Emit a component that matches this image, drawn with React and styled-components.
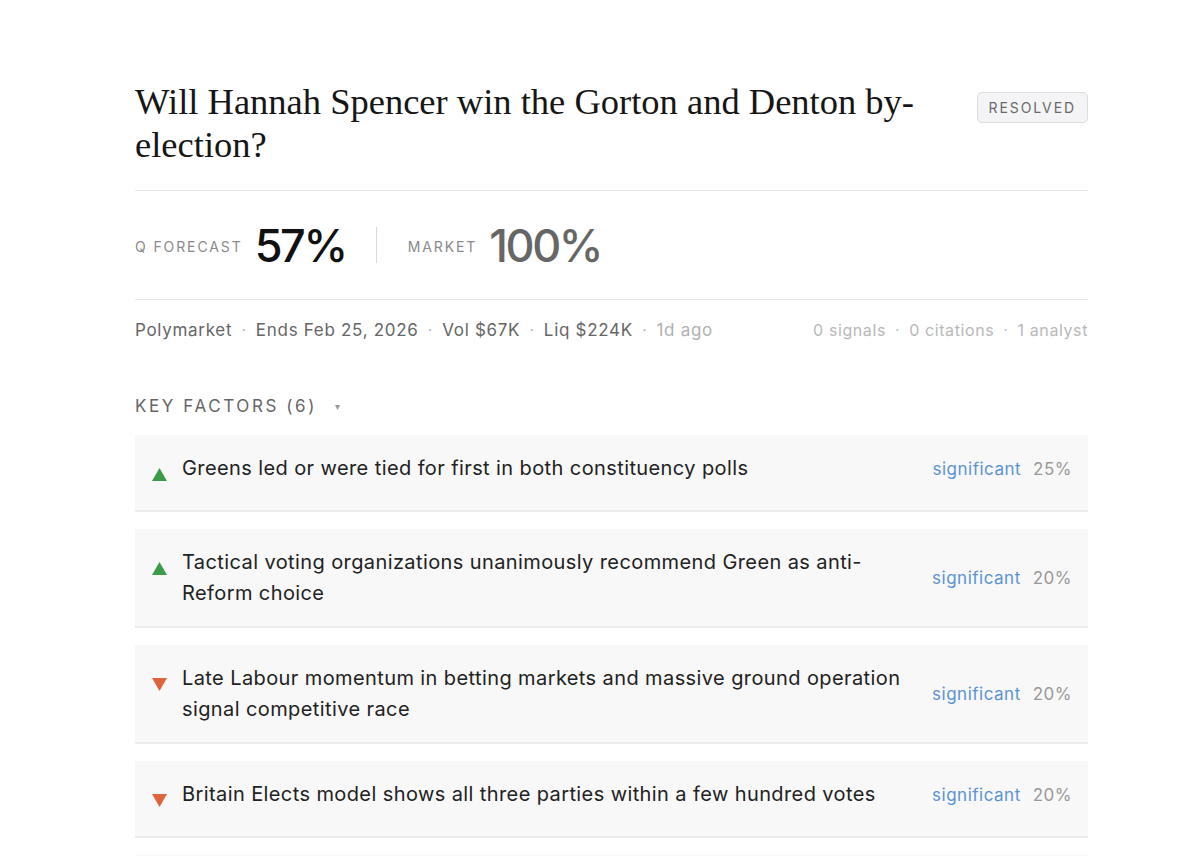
import React from 'react'
import styled, { createGlobalStyle } from 'styled-components'

const GlobalStyle = createGlobalStyle`
  body {
    margin: 0;
    background: #ffffff;
    font-family: Inter, "Noto Sans", sans-serif;
    color: #222;
  }
`

const FACTORS = [
  { dir: 'up', text: 'Greens led or were tied for first in both constituency polls', weight: 25 },
  { dir: 'up', text: 'Tactical voting organizations unanimously recommend Green as anti-Reform choice', weight: 20 },
  { dir: 'down', text: 'Late Labour momentum in betting markets and massive ground operation signal competitive race', weight: 20 },
  { dir: 'down', text: 'Britain Elects model shows all three parties within a few hundred votes', weight: 20 },
  { dir: 'down', text: 'Reform UK polling strongly in the constituency', weight: 15 }
]

const Arrow = ({ dir }) => (
  <ArrowBox>
    <svg width='15' height='13' viewBox='0 0 15 13'>
      {dir === 'up'
        ? <polygon points='7.5,0 15,13 0,13' fill='#3b9b48' />
        : <polygon points='0,0 15,0 7.5,13' fill='#e0643b' />}
    </svg>
  </ArrowBox>
)

const App = () => {
  return (
    <Page>
      <GlobalStyle />
      <Header>
        <Title>Will Hannah Spencer win the Gorton and Denton by-election?</Title>
        <Badge>RESOLVED</Badge>
      </Header>

      <Stats>
        <Stat>
          <StatLabel>Q FORECAST</StatLabel>
          <StatValue>57%</StatValue>
        </Stat>
        <StatDivider />
        <Stat>
          <StatLabel>MARKET</StatLabel>
          <StatValue muted>100%</StatValue>
        </Stat>
      </Stats>

      <Meta>
        <MetaGroup>
          <span>Polymarket</span>
          <Dot>·</Dot>
          <span>Ends Feb 25, 2026</span>
          <Dot>·</Dot>
          <span>Vol $67K</span>
          <Dot>·</Dot>
          <span>Liq $224K</span>
          <Dot>·</Dot>
          <Faint>1d ago</Faint>
        </MetaGroup>
        <MetaGroup light>
          <span>0 signals</span>
          <Dot>·</Dot>
          <span>0 citations</span>
          <Dot>·</Dot>
          <span>1 analyst</span>
        </MetaGroup>
      </Meta>

      <SectionTitle>
        KEY FACTORS (6)
        <Caret>▾</Caret>
      </SectionTitle>

      <FactorList>
        {FACTORS.map((f, i) => (
          <Factor key={i}>
            <FactorBody>
              <Arrow dir={f.dir} />
              <FactorText>{f.text}</FactorText>
              <FactorRight>
                <Impact>significant</Impact>
                <Weight>{f.weight}%</Weight>
              </FactorRight>
            </FactorBody>
          </Factor>
        ))}
      </FactorList>
    </Page>
  )
}

const Page = styled.div`
  width: 953px;
  margin-left: 135px;
  padding-top: 80px;
`

const Header = styled.div`
  display: flex;
  justify-content: space-between;
  align-items: flex-start;
  gap: 40px;
  padding-bottom: 24px;
  border-bottom: 1px solid #e6e6e6;
`

const Title = styled.h1`
  margin: 0;
  max-width: 800px;
  font-family: "Liberation Serif", "DejaVu Serif", serif;
  font-weight: 400;
  font-size: 36.5px;
  line-height: 43px;
  color: #161616;
`

const Badge = styled.div`
  flex-shrink: 0;
  margin-top: 12px;
  padding: 6px 11px;
  border: 1px solid #dcdce0;
  border-radius: 5px;
  background: #f4f4f6;
  font-size: 14px;
  letter-spacing: 1.9px;
  color: #6a6a6a;
`

const Stats = styled.div`
  display: flex;
  align-items: center;
  height: 108px;
  border-bottom: 1px solid #e6e6e6;
`

const Stat = styled.div`
  display: flex;
  align-items: center;
  gap: 12px;
`

const StatLabel = styled.span`
  font-size: 14px;
  letter-spacing: 1.9px;
  color: #8a8a8a;
  padding-top: 2px;
`

const StatValue = styled.span`
  font-size: 45px;
  font-weight: 500;
  letter-spacing: -2.4px;
  color: ${p => (p.muted ? '#666' : '#111')};
`

const StatDivider = styled.div`
  width: 1px;
  height: 36px;
  background: #dadada;
  margin: 0 31px 0 30px;
`

const Meta = styled.div`
  display: flex;
  justify-content: space-between;
  align-items: center;
  padding: 20px 0;
`

const MetaGroup = styled.div`
  display: flex;
  align-items: center;
  font-size: ${p => (p.light ? '16px' : '17px')};
  letter-spacing: ${p => (p.light ? '0.6px' : '0.7px')};
  color: ${p => (p.light ? '#b8b8b8' : '#666')};
`

const Dot = styled.span`
  color: #c4c4c4;
  margin: 0 9px;
`

const Faint = styled.span`
  color: #b0b0b0;
`

const SectionTitle = styled.div`
  display: flex;
  align-items: center;
  margin-top: 36px;
  font-size: 17px;
  letter-spacing: 2.6px;
  color: #666;
`

const Caret = styled.span`
  font-size: 10px;
  color: #999;
  margin-left: 18px;
`

const FactorList = styled.div`
  display: flex;
  flex-direction: column;
  gap: 17px;
  margin-top: 19px;
`

const Factor = styled.div`
  min-height: 77px;
  box-sizing: border-box;
  padding: 18px 16px 17px 17px;
  background: #f8f8f8;
  border-bottom: 2px solid #ececec;
`

const FactorBody = styled.div`
  display: flex;
  align-items: center;
`

const ArrowBox = styled.div`
  align-self: flex-start;
  display: flex;
  width: 15px;
  padding-top: 15px;
  margin-right: 15px;
  flex-shrink: 0;
`

const FactorText = styled.div`
  flex: 1;
  font-size: 20px;
  letter-spacing: 0.4px;
  line-height: 31px;
  color: #222;
  padding-right: 14px;
`

const FactorRight = styled.div`
  display: flex;
  align-items: center;
  gap: 12px;
  flex-shrink: 0;
  font-size: 17px;
  letter-spacing: 0.5px;
`

const Impact = styled.span`
  color: #5b93d2;
`

const Weight = styled.span`
  color: #999;
`

export default App
